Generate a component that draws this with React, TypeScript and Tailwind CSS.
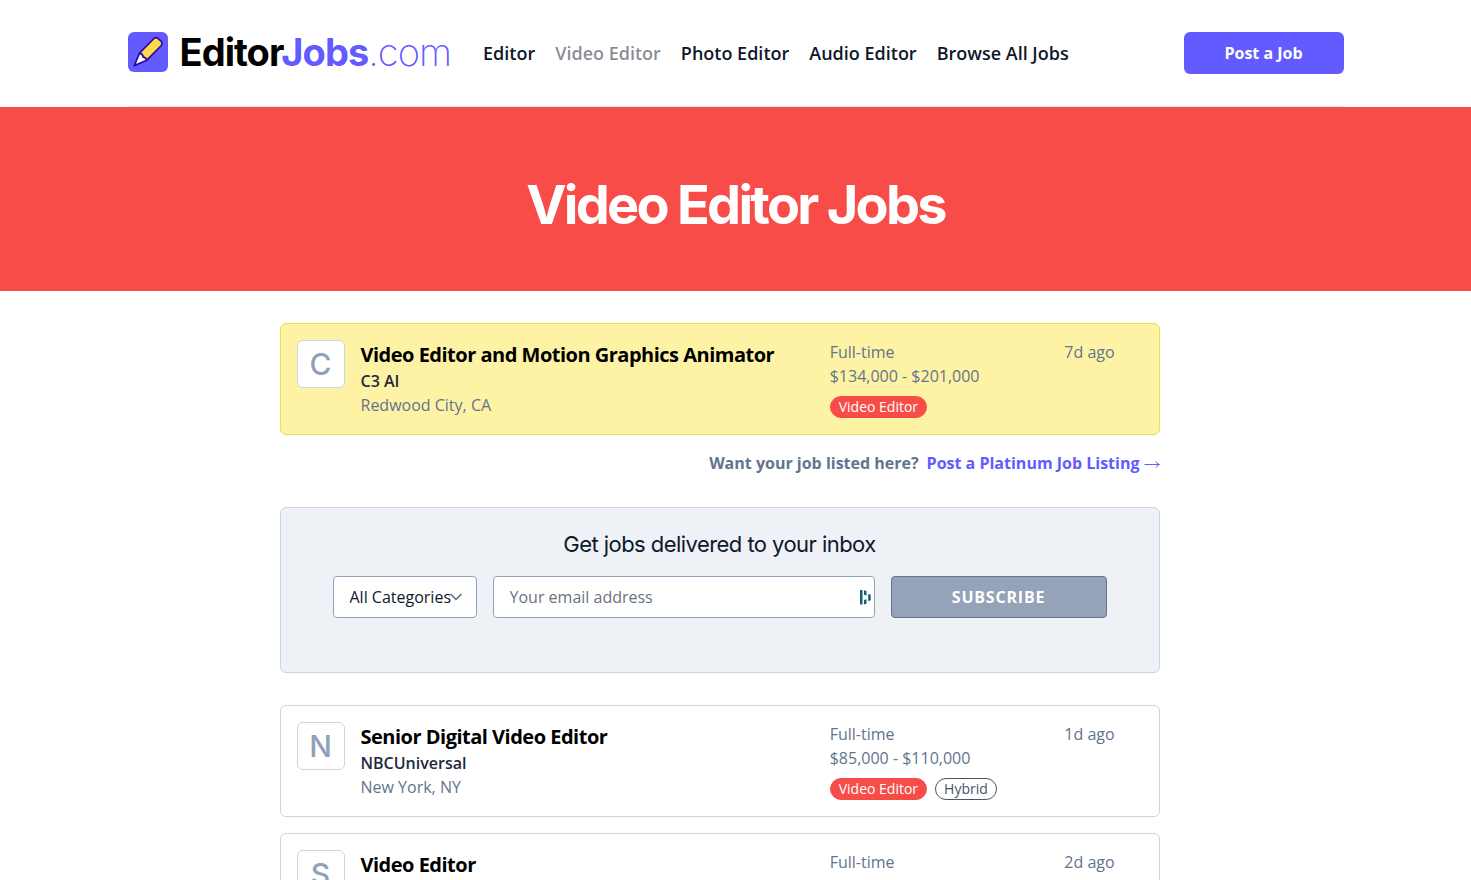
import { useState } from 'react';
import { ChevronDown } from 'lucide-react';

type Job = {
  id: number;
  title: string;
  company: string;
  location: string;
  type: string;
  salary: string;
  posted: string;
  workplace?: string;
  featured?: boolean;
};

const featuredJob: Job = {
  id: 1,
  title: 'Video Editor and Motion Graphics Animator',
  company: 'C3 AI',
  location: 'Redwood City, CA',
  type: 'Full-time',
  salary: '$134,000 - $201,000',
  posted: '7d ago',
  featured: true,
};

const jobs: Job[] = [
  {
    id: 2,
    title: 'Senior Digital Video Editor',
    company: 'NBCUniversal',
    location: 'New York, NY',
    type: 'Full-time',
    salary: '$85,000 - $110,000',
    posted: '1d ago',
    workplace: 'Hybrid',
  },
  {
    id: 3,
    title: 'Video Editor',
    company: 'Spotter',
    location: 'Los Angeles, CA',
    type: 'Full-time',
    salary: '$70,000 - $90,000',
    posted: '2d ago',
  },
];

const navLinks = ['Editor', 'Video Editor', 'Photo Editor', 'Audio Editor', 'Browse All Jobs'];

function Logo() {
  return (
    <a href="#" className="flex items-center gap-3">
      <svg viewBox="0 0 40 40" className="size-10" aria-hidden="true">
        <rect width="40" height="40" rx="6" fill="#635bff" />
        <path d="M11.5 21.2 6.3 33.6 18.8 28.2Z" fill="#fff" />
        <path
          d="M11.5 21.2 26 6.500Q28 4.800 30 6.300L33.200 9.300Q34.800 11.300 33.300 13.500L18.800 28.200Q17.600 24.800 15.200 25.100 15 21.800 11.500 21.200Z"
          fill="#ffd84d"
        />
        <path
          d="M6.300 33.600 11.500 21.200 26 6.500Q28 4.800 30 6.300L33.200 9.300Q34.800 11.300 33.300 13.500L18.800 28.200ZM11.500 21.200Q15 21.800 15.200 25.100 17.600 24.800 18.800 28.200"
          fill="none"
          stroke="#2a0b9b"
          strokeWidth="1.700"
          strokeLinejoin="round"
        />
      </svg>
      <span className="font-['Inter','Liberation_Sans',sans-serif] text-[38px] leading-10 font-bold tracking-tight text-black">
        Editor<span className="text-[#635bff]">Jobs</span>
        <span className="font-extralight text-[#635bff]">.com</span>
      </span>
    </a>
  );
}

function Header() {
  return (
    <header className="mx-auto max-w-7xl px-8">
      <div className="flex items-start justify-between border-b border-slate-200 pt-8 pb-8">
        <div className="flex items-start gap-8">
          <Logo />
          <nav className="flex items-center gap-5 pt-[7px] text-lg font-semibold text-slate-900">
            {navLinks.map((link) => (
              <a key={link} href="#" className={link === 'Video Editor' ? 'text-slate-900/50' : ''}>
                {link}
              </a>
            ))}
          </nav>
        </div>
        <a
          href="#"
          className="flex h-[42px] w-40 items-center justify-center rounded-md bg-[#635bff] font-bold text-white"
        >
          Post a Job
        </a>
      </div>
    </header>
  );
}

function JobCard({ job }: { job: Job }) {
  return (
    <a
      href="#"
      className={`flex gap-4 rounded-md border p-4 ${
        job.featured ? 'border-[#ebdc58] bg-[#fef3a5]' : 'border-slate-300 bg-white'
      }`}
    >
      <div className="flex size-12 shrink-0 items-center justify-center rounded-md border border-slate-300 bg-white font-['Inter','Liberation_Sans',sans-serif] text-3xl font-medium text-slate-400">
        {job.company[0]}
      </div>
      <div className="grid flex-1 grid-cols-10 text-slate-500">
        <div className="col-span-6 pt-px">
          <h2 className="text-xl font-bold tracking-tight text-black">{job.title}</h2>
          <p className="font-semibold text-slate-800">{job.company}</p>
          <p>{job.location}</p>
        </div>
        <div className="col-span-3">
          <p>{job.type}</p>
          <p>{job.salary}</p>
          <div className="mt-2 flex gap-2 text-sm">
            <span className="rounded-full border border-[#f84c49] bg-[#f84c49] px-2 text-white">
              Video Editor
            </span>
            {job.workplace && (
              <span className="rounded-full border border-slate-600 px-2 text-slate-600">
                {job.workplace}
              </span>
            )}
          </div>
        </div>
        <p className="whitespace-nowrap">{job.posted}</p>
      </div>
    </a>
  );
}

function Newsletter() {
  const [email, setEmail] = useState('');

  return (
    <section className="mt-8 rounded-md border border-slate-300 bg-[#eef1f6] px-13 pt-5 pb-[54px]">
      <h2 className="text-center font-['Inter','Liberation_Sans',sans-serif] text-[22px] leading-8 tracking-tight text-slate-900">
        Get jobs delivered to your inbox
      </h2>
      <form className="mt-4 flex gap-4" onSubmit={(e) => e.preventDefault()}>
        <div className="relative w-36">
          <select
            aria-label="Category"
            className="h-[42px] w-full appearance-none rounded border border-slate-400 bg-white pl-4 text-slate-900"
          >
            <option>All Categories</option>
            <option>Editor</option>
            <option>Video Editor</option>
            <option>Photo Editor</option>
            <option>Audio Editor</option>
          </select>
          <ChevronDown
            className="pointer-events-none absolute top-[11px] right-[11px] size-5 text-gray-500"
            strokeWidth={2}
          />
        </div>
        <div className="relative flex-1">
          <input
            type="email"
            aria-label="Email address"
            placeholder="Your email address"
            value={email}
            onChange={(e) => setEmail(e.target.value)}
            className="h-[42px] w-full rounded border border-slate-400 bg-white px-4 placeholder:text-gray-500"
          />
          <svg viewBox="0 0 12 16" className="absolute top-[13px] right-1 h-4 w-3" fill="#0e6275" aria-hidden="true">
            <path d="M1 1h2.500v14.500H1zM5 1.200l2.500.8v4.500l-2.500-.8zM5 11l2.500-.8v4.500l-2.500.8zM9.200 4.800l2.500 1v5.500l-2.500 1z" />
          </svg>
        </div>
        <button
          type="submit"
          className="h-[42px] w-54 rounded border border-slate-500 bg-[#96a2b8] font-bold tracking-wider text-white uppercase"
        >
          Subscribe
        </button>
      </form>
    </section>
  );
}

export default function App() {
  return (
    <div className="min-h-screen bg-white font-['Open_Sans','Noto_Sans',sans-serif] text-base text-slate-900">
      <Header />

      {/* Hero */}
      <div className="bg-[#f84c49] px-8 pt-17 pb-14">
        <h1 className="text-center font-['Inter','Liberation_Sans',sans-serif] text-[54px] leading-[60px] font-bold tracking-tighter text-white">
          Video Editor Jobs
        </h1>
      </div>

      <main className="mx-auto max-w-[912px] pt-8 pr-8 pb-16">
        <JobCard job={featuredJob} />
        <p className="mt-4 flex justify-end gap-2 font-bold text-slate-500">
          Want your job listed here?
          <a href="#" className="flex items-center gap-1 text-[#635bff]">
            Post a Platinum Job Listing
            <svg viewBox="0 0 16 16" className="mt-1 size-4" fill="none" stroke="currentColor" aria-hidden="true">
              <path d="M0.500 7.500H15M12 4.500Q13 7 15.500 7.500 13 8 12 10.500" />
            </svg>
          </a>
        </p>

        <Newsletter />

        <div className="mt-8 flex flex-col gap-4">
          {jobs.map((job) => (
            <JobCard key={job.id} job={job} />
          ))}
        </div>
      </main>
    </div>
  );
}
